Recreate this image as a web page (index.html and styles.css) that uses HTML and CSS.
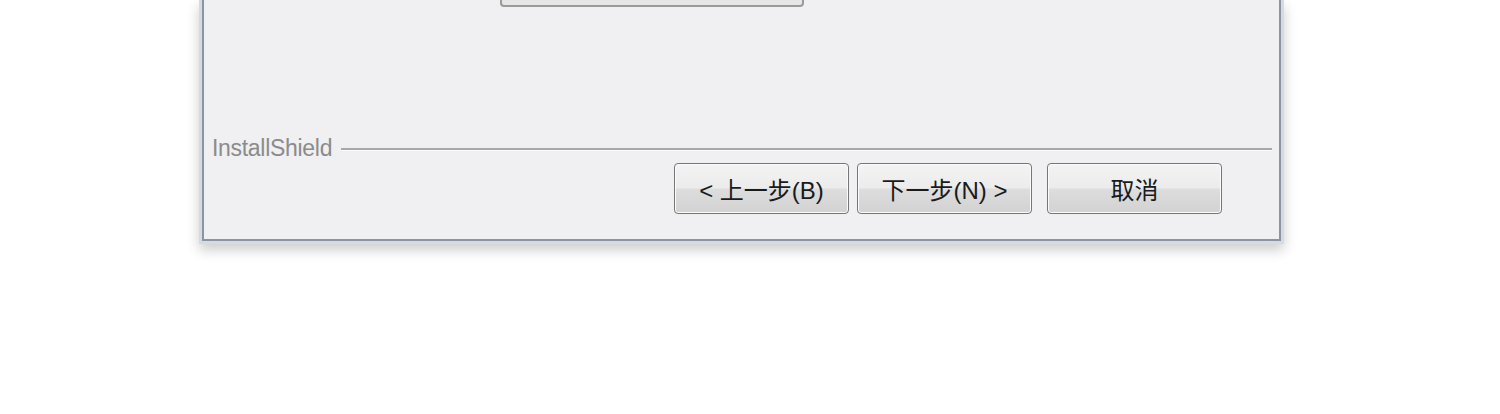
FILE: index.html
```html
<!DOCTYPE html>
<html lang="zh-CN">
<head>
    <meta charset="UTF-8">
    <title>InstallShield</title>
    <link rel="stylesheet" href="styles.css">
</head>
<body>
    <div class="frame">
        <div class="pane">
            <div class="field-row">
                <div class="field"></div>
            </div>
            <div class="brand-row">
                <span class="brand">InstallShield</span>
                <span class="rule"></span>
            </div>
            <div class="buttons">
                <button class="btn">&lt; 上一步(<u>B</u>)</button>
                <button class="btn">下一步(<u>N</u>) &gt;</button>
                <button class="btn cancel">取消</button>
            </div>
        </div>
    </div>
</body>
</html>
```

FILE: styles.css
```css
body {
    margin: 0;
    background: #ffffff;
    font-family: "Liberation Sans", "Noto Sans CJK SC", sans-serif;
    height: 414px;
    overflow: hidden;
}

.frame {
    margin-left: 199px;
    width: 1079px;
    border: 3px solid #d3dbe9;
    border-top: none;
    box-shadow: 0 6px 12px rgba(0, 0, 0, 0.2);
}

.pane {
    background: #f0eff1;
    border: 2px solid #8e939c;
    border-top: none;
    height: 239px;
}

.field-row {
    display: flex;
    height: 5px;
    padding-left: 296px;
}

.field {
    width: 300px;
    height: 50px;
    margin-top: -47px;
    border: 2px solid #9a9a9a;
    border-radius: 4px;
    background: #e6e6e6;
    flex-shrink: 0;
}

.brand-row {
    display: flex;
    align-items: center;
    margin-top: 130px;
    padding-left: 8px;
    padding-right: 7px;
    height: 26px;
}

.brand {
    font-family: "Liberation Sans", sans-serif;
    font-size: 23px;
    color: #8b8b8b;
    letter-spacing: -0.3px;
}

.rule {
    flex: 1;
    height: 2px;
    margin-left: 9px;
    margin-top: 3px;
    background: #a8a8a8;
    border-bottom: 1px solid #fafafa;
}

.buttons {
    display: flex;
    justify-content: flex-end;
    gap: 8px;
    padding-right: 57px;
    margin-top: 2px;
}

.btn {
    width: 175px;
    height: 51px;
    border: 1px solid #767676;
    border-radius: 4px;
    box-shadow: inset 0 0 0 1px #fbfbfb;
    background: linear-gradient(#f3f3f3 0%, #ececec 48%, #dddddd 52%, #d2d2d2 100%);
    font-family: "Liberation Sans", "Noto Sans CJK SC", sans-serif;
    font-size: 24px;
    color: #1a1a1a;
    padding: 0;
}

.btn u {
    text-decoration: none;
}

.cancel {
    margin-left: 7px;
}
```
